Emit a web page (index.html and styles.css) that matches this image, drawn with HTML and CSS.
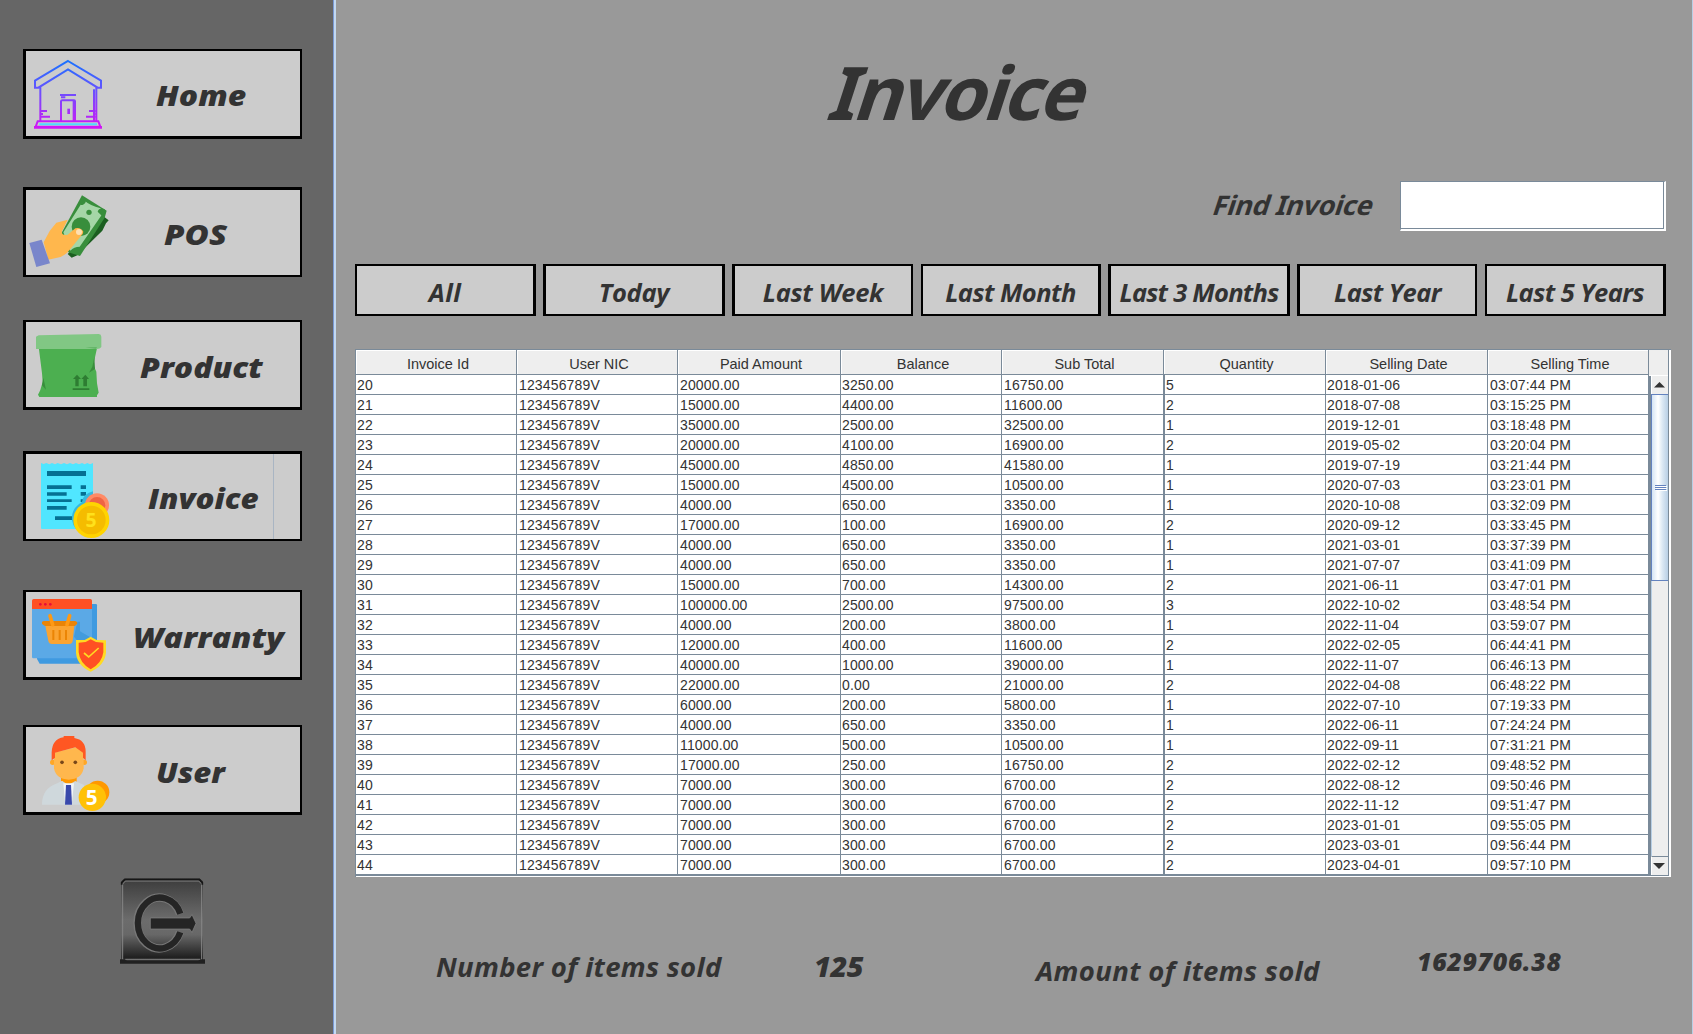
FILE: index.html
```html
<!DOCTYPE html>
<html lang="en">
<head>
<meta charset="utf-8">
<title>Invoice</title>
<link rel="stylesheet" href="styles.css">
</head>
<body>
<div class="app">
<nav class="sidebar">
  <button class="nav home">
    <svg class="icon" viewBox="78 63 258 255" fill="none" stroke="url(#hg)" stroke-width="6">
      <defs><linearGradient id="hg" gradientUnits="userSpaceOnUse" x1="0" y1="90" x2="0" y2="296"><stop offset="0" stop-color="#1673ff"/><stop offset=".45" stop-color="#6a50ff"/><stop offset="1" stop-color="#d414f5"/></linearGradient></defs>
      <path d="M204 93L303 152V173H293L204 118L115 173H105V152ZM121 170V273M282 178V273M289 170V273M180 195H228M183 202H196M183 273V214Q183 211 187 211H222Q225 211 225 214V273M221 212V273"/>
      <path d="M121 243H141M121 252H129M121 260H150M287 243H267M287 252H279M287 260H258M113 274H295L301 290H107Z"/>
      <path d="M206 236V252" stroke-width="8"/><path d="M118 283H291" stroke="#4bdcff"/><path d="M102 292H306" stroke-width="8"/>
    </svg><span>Home</span></button>
  <button class="nav pos">
    <svg class="icon" viewBox="78 480 258 255">
      <path d="M203 672L312 560L326 571L318 580L307 602L232 676L215 683Z" fill="#1b5e20"/>
      <path d="M246 496L320 542L314 563L240 678L205 667L183 612Z" fill="#388e3c"/>
      <path d="M251 510Q270 527 302 535L305 555L239 650Q222 650 211 662L190 607Z" fill="#a5d6a7"/>
      <path d="M257 506A14 14 0 0 1 242 525L240 510ZM293 545A13 13 0 0 1 318 545L309 561Z" fill="#388e3c"/>
      <circle cx="267" cy="547" r="8" fill="#388e3c"/><circle cx="243" cy="590" r="28" fill="#388e3c"/>
      <path d="M131 637L149 603L169 578L203 569L186 604Q184 618 203 614L226 595Q241 590 250 605Q250 613 241 620L213 655Q195 681 168 684L145 689Z" fill="#ffb74d"/>
      <circle cx="237" cy="606" r="9" fill="#ffe0b2"/>
      <path d="M88 639L125 629L150 700L109 711Z" fill="#7986cb"/>
    </svg><span>POS</span></button>
  <button class="nav product">
    <svg class="icon" viewBox="78 66 258 255">
      <path d="M116 140H292L280 194L289 215L291 250L296 278L291 286V291H118L114 284L121 270L128 246L126 220Z" fill="#4caf50"/>
      <path d="M108 110L116 106L296 102Q304 103 304 110V141Q300 147 291 147H108Z" fill="#81c784"/>
      <path d="M256 142L291 141L288 147Z" fill="#64b668"/>
      <path d="M283 170L285 207L267 218L277 200ZM130 233L138 269L126 256Z" fill="#388e3c"/>
      <path d="M219 237L231 224L243 237H236V259H226V237ZM244 237L256 224L267 237H261V259H250V237ZM218 265H268V270H218Z" fill="#2e7d32"/>
    </svg><span>Product</span></button>
  <button class="nav invoice">
    <svg class="icon" viewBox="78 462 258 255">
      <path d="M123 489L131 492L139 489L148 493L156 489L165 493L173 489L183 493L192 489L201 493L210 489L219 493L228 489L237 493L246 489L254 493L262 489L270 493L279 489V687H126Q123 687 123 684Z" fill="#50e6ff"/>
      <path d="M141 513H258V528H141ZM141 556H215V567H141ZM242 556H258V567H242ZM141 577H200V587H141ZM242 576H258V587H242ZM141 598H215V606H141ZM242 598H258V606H242ZM141 618H200V629H141ZM165 649H216V660H165Z" fill="#057093"/>
      <path d="M279 574Q248 582 246 606Q213 625 216 660Q218 676 228 687H279Z" fill="#35b8df"/>
      <circle cx="291" cy="616" r="36" fill="#ff8a65"/><circle cx="291" cy="616" r="25" fill="#ee6544"/>
      <circle cx="274" cy="660" r="54" fill="#ffd400"/><circle cx="274" cy="660" r="43" fill="#f5bc00"/>
      <text x="273" y="682" class="coin" fill="#ffe11c">5</text>
    </svg><span>Invoice</span></button>
  <button class="nav warranty">
    <svg class="icon" viewBox="78 66 258 255">
      <path d="M111 102H288Q291 102 291 106V281H119L111 267Z" fill="#3f9ae0"/>
      <path d="M96 110H276V265H100Q96 265 96 260Z" fill="#5ba9e6"/><path d="M232 155H240V184L276 205V265L222 200Z" fill="#429bdd"/>
      <path d="M96 117V92Q96 87 101 87H271Q276 87 276 92V117Z" fill="#ff5023"/>
      <g fill="#e80e38"><circle cx="121" cy="103" r="4"/><circle cx="136" cy="103" r="4"/><circle cx="151" cy="103" r="4"/></g>
      <path d="M136 168H223L218 213Q217 222 207 222H156Q147 222 145 213Z" fill="#faa432"/>
      <path d="M126 157Q127 153 133 153H225Q232 154 232 160Q229 167 224 168H136Q131 167 126 161Z" fill="#e98407"/>
      <path d="M150 137L158 164M209 137L201 164" stroke="#ff9914" stroke-width="11" stroke-linecap="round"/>
      <path d="M160 180V210M179 180V210M198 180V210" stroke="#eb8505" stroke-width="6"/>
      <path d="M272 200L290 210L318 211V248Q314 286 272 305Q231 286 228 248V210L254 210Z" fill="#ffda22"/>
      <path d="M272 208L288 216L310 218V247Q306 280 272 298Q239 279 236 247V218L257 216Z" fill="#ff5023"/>
      <path d="M252 249L266 261L296 234" fill="none" stroke="#ffda22" stroke-width="5"/>
    </svg><span>Warranty</span></button>
  <button class="nav user">
    <svg class="icon" viewBox="78 471 258 255">
      <path d="M183 617H230V637L206 652L183 637Z" fill="#ff9800"/>
      <path d="M126 704Q126 655 172 640L186 632L205 645L226 633L252 645L270 704Z" fill="#cfd8dc"/>
      <path d="M190 640H222L215 704H196Z" fill="#f2f5f7"/><path d="M198 645H213L216 704H195Z" fill="#3949ab"/>
      <circle cx="158" cy="577" r="8" fill="#ffa726"/><circle cx="253" cy="577" r="8" fill="#ffa726"/>
      <path d="M162 548L244 528L251 545V595Q245 628 206 629Q168 628 162 595Z" fill="#ffb74d"/>
      <path d="M155 571V547Q157 506 191 502V498H223V504Q257 510 257 545V571L249 563V548L226 532L165 548V563Z" fill="#ff5722"/>
      <circle cx="186" cy="577" r="5.500" fill="#784719"/><circle cx="226" cy="577" r="5.500" fill="#784719"/>
      <circle cx="293" cy="667" r="35" fill="#ff9800"/><circle cx="277" cy="682" r="41" fill="#ffc107"/>
      <text x="275" y="704" class="coin big" fill="#fff">5</text>
    </svg><span>User</span></button>
  <button class="exit" aria-label="Exit">
    <svg width="85" height="87" viewBox="60 54 255 261">
      <defs><linearGradient id="eg" x1="0" y1="0" x2="0" y2="1"><stop offset="0" stop-color="#3c3c3c"/><stop offset=".5" stop-color="#6c6c6c"/><stop offset=".68" stop-color="#686868"/><stop offset=".96" stop-color="#202020"/><stop offset="1" stop-color="#333"/></linearGradient></defs>
      <path d="M64 64L72 56H300L309 64V302H64Z" fill="url(#eg)"/>
      <path d="M68 300V72L76 63H296L305 72V300Z" fill="none" stroke="#858585" stroke-width="3"/>
      <path d="M65 74V68L75 58H298L307 68V74" fill="none" stroke="#161616" stroke-width="5"/>
      <path d="M60 298H75L80 301H295L303 298H315V311H60Z" fill="#202020"/><path d="M76 298H300" stroke="#777" stroke-width="3"/>
      <path d="M240 162A66 76 0 1 0 240 216" fill="none" stroke="#777" stroke-width="25"/>
      <path d="M241 161A66 76 0 1 0 241 217" fill="none" stroke="#252525" stroke-width="19"/>
      <path d="M151 174H269L276 164L288 190L276 217L269 207H151Z" fill="#252525" stroke="#858585" stroke-width="2"/>
    </svg></button>
</nav>
<main class="content">
  <h1><span>Invoice</span></h1>
  <div class="search"><label for="find"><span>Find Invoice</span></label><input id="find" type="text"></div>
  <div class="filters">
    <button class="f1">All</button><button class="f2">Today</button><button class="f3">Last Week</button><button class="f4">Last Month</button><button class="f5">Last 3 Months</button><button class="f6">Last Year</button><button class="f7">Last 5 Years</button>
  </div>
  <div class="grid">
    <table>
      <colgroup><col class="c1"><col class="c2"><col class="c3"><col class="c4"><col class="c5"><col class="c6"><col class="c7"><col class="c8"></colgroup>
      <thead><tr><th>Invoice Id<th>User NIC<th>Paid Amount<th>Balance<th>Sub Total<th>Quantity<th>Selling Date<th>Selling Time</tr></thead>
      <tbody>
      <tr><td>20<td>123456789V<td>20000.00<td>3250.00<td>16750.00<td>5<td>2018-01-06<td>03:07:44 PM
      <tr><td>21<td>123456789V<td>15000.00<td>4400.00<td>11600.00<td>2<td>2018-07-08<td>03:15:25 PM
      <tr><td>22<td>123456789V<td>35000.00<td>2500.00<td>32500.00<td>1<td>2019-12-01<td>03:18:48 PM
      <tr><td>23<td>123456789V<td>20000.00<td>4100.00<td>16900.00<td>2<td>2019-05-02<td>03:20:04 PM
      <tr><td>24<td>123456789V<td>45000.00<td>4850.00<td>41580.00<td>1<td>2019-07-19<td>03:21:44 PM
      <tr><td>25<td>123456789V<td>15000.00<td>4500.00<td>10500.00<td>1<td>2020-07-03<td>03:23:01 PM
      <tr><td>26<td>123456789V<td>4000.00<td>650.00<td>3350.00<td>1<td>2020-10-08<td>03:32:09 PM
      <tr><td>27<td>123456789V<td>17000.00<td>100.00<td>16900.00<td>2<td>2020-09-12<td>03:33:45 PM
      <tr><td>28<td>123456789V<td>4000.00<td>650.00<td>3350.00<td>1<td>2021-03-01<td>03:37:39 PM
      <tr><td>29<td>123456789V<td>4000.00<td>650.00<td>3350.00<td>1<td>2021-07-07<td>03:41:09 PM
      <tr><td>30<td>123456789V<td>15000.00<td>700.00<td>14300.00<td>2<td>2021-06-11<td>03:47:01 PM
      <tr><td>31<td>123456789V<td>100000.00<td>2500.00<td>97500.00<td>3<td>2022-10-02<td>03:48:54 PM
      <tr><td>32<td>123456789V<td>4000.00<td>200.00<td>3800.00<td>1<td>2022-11-04<td>03:59:07 PM
      <tr><td>33<td>123456789V<td>12000.00<td>400.00<td>11600.00<td>2<td>2022-02-05<td>06:44:41 PM
      <tr><td>34<td>123456789V<td>40000.00<td>1000.00<td>39000.00<td>1<td>2022-11-07<td>06:46:13 PM
      <tr><td>35<td>123456789V<td>22000.00<td>0.00<td>21000.00<td>2<td>2022-04-08<td>06:48:22 PM
      <tr><td>36<td>123456789V<td>6000.00<td>200.00<td>5800.00<td>1<td>2022-07-10<td>07:19:33 PM
      <tr><td>37<td>123456789V<td>4000.00<td>650.00<td>3350.00<td>1<td>2022-06-11<td>07:24:24 PM
      <tr><td>38<td>123456789V<td>11000.00<td>500.00<td>10500.00<td>1<td>2022-09-11<td>07:31:21 PM
      <tr><td>39<td>123456789V<td>17000.00<td>250.00<td>16750.00<td>2<td>2022-02-12<td>09:48:52 PM
      <tr><td>40<td>123456789V<td>7000.00<td>300.00<td>6700.00<td>2<td>2022-08-12<td>09:50:46 PM
      <tr><td>41<td>123456789V<td>7000.00<td>300.00<td>6700.00<td>2<td>2022-11-12<td>09:51:47 PM
      <tr><td>42<td>123456789V<td>7000.00<td>300.00<td>6700.00<td>2<td>2023-01-01<td>09:55:05 PM
      <tr><td>43<td>123456789V<td>7000.00<td>300.00<td>6700.00<td>2<td>2023-03-01<td>09:56:44 PM
      <tr><td>44<td>123456789V<td>7000.00<td>300.00<td>6700.00<td>2<td>2023-04-01<td>09:57:10 PM
      </tbody>
    </table>
    <div class="side">
      <div class="corner"></div>
      <div class="scroll">
        <div class="arrow"><svg width="11" height="6" viewBox="0 0 11 6"><path d="M5.500 0L11 5.500H0Z" fill="#333"/></svg></div>
        <div class="thumb"><i></i><i></i><i></i></div>
        <div class="track"></div>
        <div class="arrow down"><svg width="12" height="6" viewBox="0 0 12 6"><path d="M0 0H12L6 6Z" fill="#333"/></svg></div>
      </div>
    </div>
  </div>
  <div class="totals">
    <span class="t1">Number of items sold</span><span class="t2">125</span><span class="t3">Amount of items sold</span><span class="t4">1629706.38</span>
  </div>
</main>
</div>
</body>
</html>
```
FILE: styles.css
```css
* { box-sizing: border-box; }
body { margin: 0; background: #999; color: #333; overflow: hidden; }
button { padding: 0; border-radius: 0; color: inherit; font: inherit; }
.app { display: flex; width: 1693px; height: 1034px; border-right: 1px solid #b8cfe5; }

.sidebar {
  display: flex; flex-direction: column; flex: none;
  width: 336px; padding: 49px 0 0 23px;
  background: #666;
  border-right: 2px solid #c3d9f2;
  box-shadow: inset -1px 0 #7a9ad6;
}
.nav {
  display: flex; width: 279px; height: 90px;
  background: #ccc; border: solid #000; border-width: 2px 2px 3px 3px;
  font: italic 800 29px/88px "Open Sans", sans-serif;
}
.nav span { white-space: nowrap; transform: scaleX(1.1); transform-origin: 0 0; }
.icon { flex: none; width: 86px; height: 85px; }
.home span { margin-left: 44px; }
.pos { margin-top: 48px; border-width: 3px 2px 2px 3px; line-height: 87px; }
.pos span { margin-left: 52px; transform: scaleX(1.14); }
.product { margin-top: 43px; }
.product span { margin-left: 28px; }
.invoice { margin-top: 41px; border-width: 3px 2px 2px 3px; background: linear-gradient(90deg, #ccc 247px, #a9b5c3 247px 248px, #ccc 248px); }
.invoice span { margin-left: 36px; transform: scaleX(1.08); }
.warranty { margin-top: 49px; }
.warranty span { margin-left: 21px; transform: scaleX(1.12); }
.user { margin-top: 45px; }
.user span { margin-left: 44px; transform: scaleX(1.07); }
.product, .warranty, .user { line-height: 90px; }
.coin { font: 700 58px "Open Sans", sans-serif; text-anchor: middle; }
.big { font-size: 62px; }
.exit { width: 85px; height: 87px; margin: 63px 0 0 97px; border: 0; background: none; }
.exit svg { display: block; }

.content { flex: 1; padding: 0 0 0 19px; }
h1 {
  margin: 0; padding: 37px 0 0 470px; height: 181px;
  font: 700 74px/110px "Noto Sans", sans-serif;
}
h1 span { display: inline-block; letter-spacing: -2.300px; transform: skewX(-18deg); transform-origin: 0 75%; }
.search { display: flex; height: 51px; }
.search label { width: 1045px; padding-left: 856px; font: 700 27px/48px "Noto Sans", sans-serif; white-space: nowrap; }
.search label span { display: inline-block; letter-spacing: -.3px; transform: skewX(-18deg); transform-origin: 0 70%; }
.search input {
  width: 266px; height: 50px; padding: 0 4px; background: #fff; border: 1px solid #7a8a99;
  border-width: 1px 2px 2px 1px; border-right-color: #fff; border-bottom-color: #fff;
  box-shadow: inset -1px -1px #7a8a99;
}
.filters {
  display: grid; grid-template-columns: 181px 182px 181px 180px 182px 180px 181px;
  column-gap: 7px; height: 52px; margin-top: 32px;
  font: italic 700 25.5px/44px "Open Sans", sans-serif; word-spacing: -2px;
}
.filters button { padding-top: 4px; background: #ccc; border: 2px solid #000; white-space: nowrap; }
.filters .f1, .filters .f4, .filters .f7 { border-right-width: 3px; }
.filters .f2, .filters .f5 { border-left-width: 3px; border-right-width: 3px; }
.filters .f3, .filters .f6 { border-left-width: 3px; }
.filters .f1 { letter-spacing: .4px; }
.filters .f2, .filters .f3 { letter-spacing: -.3px; }
.filters .f4, .filters .f5, .filters .f6, .filters .f7 { letter-spacing: -.55px; }
.filters .f5 { letter-spacing: -.75px; }
.f4, .f5, .f6 { position: relative; left: 1px; }
.f7 { position: relative; left: 2px; }

.grid {
  display: flex; width: 1316px; height: 528px; margin-top: 33px;
  border: solid #7a8a99; border-width: 1px 0 0 1px;
  background: #fff; font: 14px/17px "Liberation Sans", Arial, sans-serif; letter-spacing: .15px;
}
table { width: 1293px; table-layout: fixed; border-spacing: 0; height: 526px; border-bottom: 1px solid #7a8a99; }
.c1, .c2 { width: 161px; }
.c3 { width: 163px; }
.c4 { width: 161px; }
.c5, .c6, .c7 { width: 162px; }
.c8 { width: 161px; }
th {
  height: 25px; padding: 4px 0 0 4px; font-weight: 400; font-size: 14.500px; letter-spacing: 0; line-height: 19px; background: #eee;
  border: solid #7a8a99; border-width: 0 1px 1px 0; box-shadow: inset 1px 1px #fff;
}
td { height: 20px; padding: 2px 0 0 1px; border: solid #7a8a99; border-width: 0 1px 1px 0; white-space: nowrap; }
td:nth-child(2), td:nth-child(3), td:nth-child(5), td:nth-child(8) { padding-left: 2px; }
td:nth-child(6) { border-left-width: 1px; }
.side { width: 20px; height: 526px; border-right: 1px solid #7a8a99; }
.corner { height: 26px; background: #eee; border-bottom: 1px solid #fff; }
.scroll { display: flex; flex-direction: column; height: 500px; border-left: 2px solid #7a8a99; border-bottom: 1px solid #7a8a99; background: #eee; }
.arrow { display: flex; justify-content: center; align-items: center; height: 18px; flex: none; padding-right: 2px; border-left: 1px solid #fff; }
.down { height: 19px; border-top: 1px solid #7a8a99; }
.thumb {
  display: flex; flex-direction: column; justify-content: center; align-items: center; gap: 1px;
  height: 187px; flex: none; border: 1px solid #6382bf; border-right: 0;
  background: linear-gradient(90deg, #d5e4f4, #fff 38%, #dbe8f4 65%, #b8cfe5);
}
.thumb i { width: 11px; height: 1px; background: #6382bf; box-shadow: 1px 1px #fff; }
.track { flex: 1; border-left: 1px solid #b8cfe5; }

.totals { display: flex; height: 80px; margin-top: 64px; font: italic 700 27.5px/40px "Open Sans", sans-serif; white-space: nowrap; }
.t1 { width: 459px; padding: 6px 0 0 81px; letter-spacing: .3px; }
.t2 { width: 222px; font-weight: 800; font-size: 29px; padding-top: 5px; letter-spacing: -.4px; }
.t3 { width: 381px; padding-top: 10px; letter-spacing: .35px; }
.t4 { font-weight: 800; font-size: 25px; letter-spacing: .65px; }
```
